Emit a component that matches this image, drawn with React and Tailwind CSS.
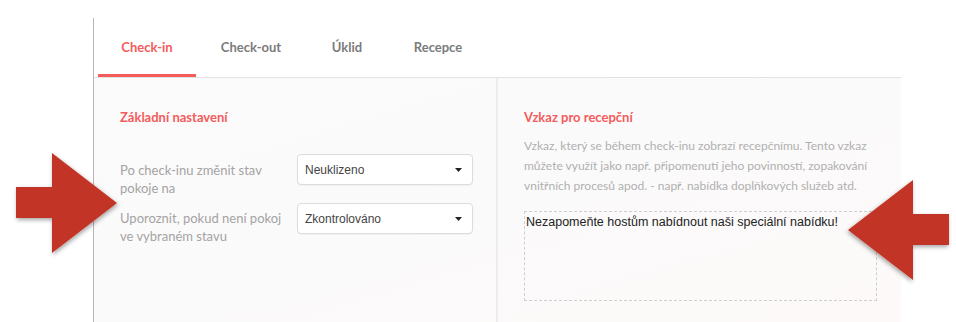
const tabs = [
  { label: 'Check-in', w: 'w-[98px] ml-[4px]' },
  { label: 'Check-out', w: 'w-[84px] ml-[13px]' },
  { label: 'Úklid', w: 'w-[60px] ml-[24px]' },
  { label: 'Recepce', w: 'w-[70px] ml-[26px]' }
]

const Arrow = ({ flip, className }) => (
  <svg width="110" height="120" viewBox="0 0 110 120" className={className} style={{ transform: flip ? 'scaleX(-1)' : undefined }}>
    <defs>
      <filter id={flip ? 'shR' : 'shL'} x="-20%" y="-20%" width="140%" height="140%">
        <feDropShadow dx="1" dy="2" stdDeviation="2" floodColor="#000" floodOpacity="0.35" />
      </filter>
    </defs>
    <polygon
      points="4,38 40,38 40,4 105,54 40,104 40,69 4,69"
      fill="#c23628"
      filter={`url(#${flip ? 'shR' : 'shL'})`}
    />
  </svg>
)

const Select = ({ value }) => (
  <div className="w-[176px] h-[31px] shrink-0 flex items-center justify-between pl-[7px] pr-[10px] bg-white border border-[#dcdcdc] rounded-[4px] shadow-[0_1px_1px_rgba(0,0,0,0.04)] font-['Liberation_Sans',sans-serif] text-[12px] text-[#444]">
    <span>{value}</span>
    <svg width="7" height="4" viewBox="0 0 7 4"><polygon points="0,0 7,0 3.5,4" fill="#222" /></svg>
  </div>
)

export default function App() {
  return (
    <div className="relative w-[956px] h-[322px] bg-white overflow-hidden font-['Lato',sans-serif]">
      <div className="ml-[93px] mt-[18px] w-[808px] h-[304px] border-l border-[#bfb0bb] flex flex-col">
        {/* tabs */}
        <div className="h-[60px] flex border-b border-[#e2e0e0] font-bold text-[13px]">
          {tabs.map((t, i) => (
            <div
              key={t.label}
              className={`h-full flex items-center justify-center ${t.w} ${i === 0 ? 'text-[#f45b5b] border-b-[3px] border-[#f45b5b] pt-[3px]' : 'text-[#7b7b7b]'}`}
            >
              {t.label}
            </div>
          ))}
        </div>

        {/* content */}
        <div className="flex-1 flex bg-gradient-to-br from-[#fcfbfb] via-[#fbfafa] to-[#fdf9f9]">
          <div className="w-[405px] pl-[26px] pt-[30px] border-r-2 border-[#ececec]">
            <h2 className="text-[13px] font-bold text-[#f45b5b] leading-[18px]">Základní nastavení</h2>
            <div className="mt-[28px] flex flex-col gap-[6px]">
              <div className="flex items-start">
                <p className="w-[177px] text-[13px] leading-[18px] text-[#a3a3a3] pt-[7px]">Po check-inu změnit stav pokoje na</p>
                <Select value="Neuklizeno" />
              </div>
              <div className="flex items-start">
                <p className="w-[177px] text-[13px] leading-[18px] text-[#a3a3a3] pt-[6px]">Uporoznit, pokud není pokoj ve vybraném stavu</p>
                <Select value="Zkontrolováno" />
              </div>
            </div>
          </div>
          <div className="flex-1 pl-[26px] pt-[30px] pr-[24px]">
            <h2 className="text-[13px] font-bold text-[#f45b5b] leading-[18px]">Vzkaz pro recepční</h2>
            <p className="mt-[10px] text-[12px] leading-[20px] text-[#b0b0b0] w-[350px]">
              Vzkaz, který se během check-inu zobrazí recepčnímu. Tento vzkaz můžete využít jako např. připomenutí jeho povinností, zopakování vnitřních procesů apod. - např. nabídka doplňkových služeb atd.
            </p>
            <div className="mt-[15px] w-[353px] h-[90px] border border-dashed border-[#cfcfcf] px-[1px] pt-[1px] font-['Liberation_Sans',sans-serif] text-[12.5px] text-[#222] leading-[18px]">
              Nezapomeňte hostům nabídnout naši speciální nabídku!
            </div>
          </div>
        </div>
      </div>

      {/* annotation arrows */}
      <Arrow className="absolute left-[12px] top-[149px]" />
      <Arrow flip className="absolute left-[843px] top-[176px]" />
    </div>
  )
}
